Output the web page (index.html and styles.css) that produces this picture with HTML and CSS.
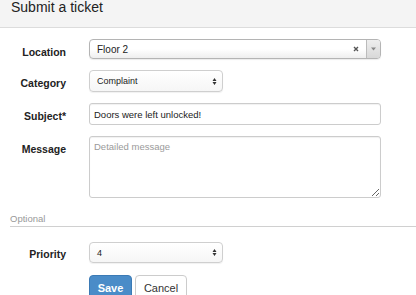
FILE: index.html
```html
<!DOCTYPE html>
<html>
<head>
<meta charset="utf-8">
<link rel="stylesheet" href="styles.css">
</head>
<body>
<div class="header"><h1 class="title">Submit a ticket</h1></div>
<form class="form">
  <div class="row">
    <label class="label">Location</label>
    <div class="s2">
      <span class="s2-text">Floor 2</span>
      <svg class="s2-clear" width="6" height="6" viewBox="0 0 6 6"><path d="M1 1L5 5M5 1L1 5" stroke="#555" stroke-width="1.4"/></svg>
      <span class="s2-arrow"><svg width="5" height="4" viewBox="0 0 5 4"><path d="M0 0.5H5L2.5 3.5Z" fill="#888"/></svg></span>
    </div>
  </div>
  <div class="row">
    <label class="label">Category</label>
    <div class="select select-cat">
      <span class="select-text">Complaint</span>
      <svg class="updown" width="5" height="7" viewBox="0 0 5 7"><path d="M0.5 3L2.5 0L4.5 3Z M0.5 4L2.5 7L4.5 4Z" fill="#333"/></svg>
    </div>
  </div>
  <div class="row">
    <label class="label">Subject*</label>
    <input class="input" type="text" value="Doors were left unlocked!">
  </div>
  <div class="row">
    <label class="label">Message</label>
    <textarea class="textarea" placeholder="Detailed message"></textarea>
  </div>
  <div class="legend">Optional</div>
  <div class="row row-priority">
    <label class="label label-priority">Priority</label>
    <div class="select select-pri">
      <span class="select-text">4</span>
      <svg class="updown" width="5" height="7" viewBox="0 0 5 7"><path d="M0.5 3L2.5 0L4.5 3Z M0.5 4L2.5 7L4.5 4Z" fill="#333"/></svg>
    </div>
  </div>
  <div class="actions">
    <button type="button" class="btn btn-primary">Save</button>
    <button type="button" class="btn btn-default">Cancel</button>
  </div>
</form>
</body>
</html>
```
FILE: styles.css
```css
* { box-sizing: border-box; }
html, body { margin: 0; padding: 0; background: #fff; overflow: hidden; }
body { font-family: "Liberation Sans", Arial, sans-serif; color: #333; }

.header {
  height: 28px;
  background: #f4f4f4;
  border-bottom: 1px solid #dcdcdc;
  padding-left: 11px;
}
.title {
  margin: 0;
  padding: 0;
  font-size: 14px;
  font-weight: normal;
  line-height: 15px;
  color: #222;
}

.form {
  display: flex;
  flex-direction: column;
  padding-top: 11px;
}
.row {
  display: flex;
  align-items: flex-start;
  margin-bottom: 11px;
}
.label {
  width: 66px;
  margin-right: 23px;
  text-align: right;
  font-size: 10.5px;
  font-weight: bold;
  line-height: 12px;
  padding-top: 7px;
  color: #222;
}

.s2 {
  width: 292px;
  height: 20px;
  border: 1px solid #b4b4b4;
  border-radius: 4px;
  background: linear-gradient(#fff 0%, #fff 50%, #eee 100%);
  display: flex;
  align-items: center;
  box-shadow: 0 1px 1px rgba(0,0,0,0.08);
}
.s2-text {
  flex: 1;
  padding-left: 7px;
  font-size: 10px;
  color: #222;
}
.s2-clear { margin-right: 7px; }
.s2-arrow {
  width: 14px;
  height: 100%;
  border-left: 1px solid #bbb;
  border-radius: 0 3px 3px 0;
  background: linear-gradient(#eee, #d8d8d8);
  display: flex;
  align-items: center;
  justify-content: center;
}

.select {
  width: 134px;
  border: 1px solid #cfcfcf;
  border-radius: 4px;
  background: linear-gradient(#fff, #f6f6f6);
  display: flex;
  align-items: center;
  padding: 0 5px 0 7px;
  box-shadow: 0 1px 1px rgba(0,0,0,0.06);
}
.select-cat { height: 22px; }
.select-pri { height: 21px; }
.select-text {
  flex: 1;
  font-size: 9px;
  color: #222;
}

.input, .textarea {
  width: 292px;
  border: 1px solid #ccc;
  border-radius: 3px;
  font-family: "Liberation Sans", Arial, sans-serif;
  font-size: 9.5px;
  color: #222;
  padding: 0 4px;
  margin: 0;
  box-shadow: inset 0 1px 1px rgba(0,0,0,0.06);
  outline: none;
  background: #fff;
}
.input { height: 22px; }
.textarea {
  height: 62px;
  padding-top: 4px;
  resize: both;
}
.textarea::placeholder { color: #9a9a9a; }

.legend {
  margin: 1px 0 15px 10px;
  height: 17px;
  border-bottom: 1px solid #d0d0d0;
  font-size: 9.5px;
  line-height: 12px;
  padding-top: 3px;
  color: #999;
}

.label-priority { padding-top: 6px; }
.row-priority { margin-bottom: 12px; }

.actions {
  display: flex;
  gap: 3px;
  padding-left: 89px;
}
.btn {
  height: 25px;
  border-radius: 4px;
  font-family: "Liberation Sans", Arial, sans-serif;
  font-size: 11px;
  padding: 0;
  margin: 0;
}
.btn-primary {
  width: 43px;
  background: #4a8cc8;
  border: 1px solid #3b7ab5;
  color: #fff;
  font-weight: bold;
}
.btn-default {
  width: 52px;
  background: #fff;
  border: 1px solid #ccc;
  color: #333;
}
```
